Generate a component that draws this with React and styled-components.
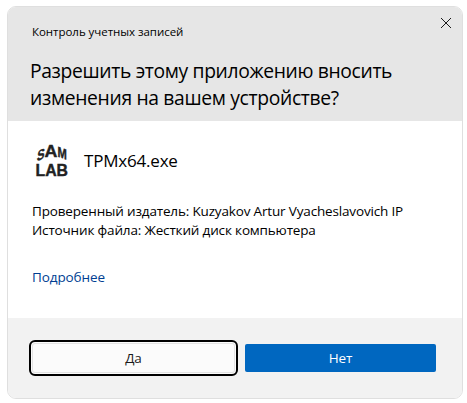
import React from 'react';
import styled, { createGlobalStyle } from 'styled-components';

const GlobalStyle = createGlobalStyle`
  * { box-sizing: border-box; }
  body { margin: 0; background: #fff; font-family: "Open Sans", "Noto Sans", sans-serif; color: #000; }
`;

const Screen = styled.main`
  width: 467px;
  height: 403px;
  padding: 6px 4px 4px 7px;
  overflow: hidden;
`;

const Dialog = styled.section`
  display: flex;
  flex-direction: column;
  width: 456px;
  height: 393px;
  border: 1px solid #dfdfdf;
  border-radius: 9px;
  overflow: hidden;
  background: #fff;
`;

const Header = styled.header`
  display: flex;
  justify-content: space-between;
  height: 114px;
  flex: none;
  padding: 0 9px 0 24px;
  background: #e6e6e6;
`;

const Headings = styled.div`
  padding-top: 15px;
`;

const Line = styled.div`
  white-space: nowrap;
  font-size: ${p => p.$size}px;
  line-height: ${p => p.$height}px;
  letter-spacing: ${p => p.$track || 0}px;
`;

const Title = styled.h1`
  margin: 15px 0 0 -2px;
  font-weight: 400;
`;

const CloseButton = styled.button`
  display: block;
  width: 15px;
  height: 15px;
  margin-top: 8px;
  padding: 0;
  border: 0;
  background: none;
  svg { display: block; }
`;

const Body = styled.div`
  height: 197px;
  flex: none;
  padding: 20px 24px 0;
`;

const Program = styled.div`
  display: flex;
  align-items: center;
  gap: 12px;
  height: 40px;
  svg { flex: none; }
`;

const Details = styled.div`
  margin-top: 21px;
`;

const MoreLink = styled.a`
  display: block;
  margin-top: 28px;
  color: #003e92;
`;

const Footer = styled.footer`
  display: flex;
  align-items: flex-start;
  gap: 7px;
  flex: 1;
  padding: 22px 0 0 21px;
  background: #f2f2f2;
`;

const Button = styled.button`
  display: flex;
  align-items: center;
  justify-content: center;
  padding: 0;
  font-family: inherit;
`;

const YesButton = styled(Button)`
  width: 209px;
  height: 36px;
  border: 2px solid #000;
  border-radius: 6px;
  background: #fbfbfb;
  box-shadow: inset 0 0 0 1px #fbfbfb, inset 0 0 0 2px #e3e3e3;
  color: #1b1b1b;
`;

const NoButton = styled(Button)`
  width: 191px;
  height: 28px;
  margin-top: 4px;
  border: 0;
  border-radius: 2px;
  background: #0067c0;
  color: #fff;
`;

const Logo = () => (
  <svg width="40" height="40" viewBox="0 0 40 40" fontFamily="Liberation Sans" fontWeight="700" fill="#222" stroke="#222" strokeWidth=".4">
    <text transform="matrix(.76 -.34 -.12 1 4.6 20.5)" fontSize="15">S</text>
    <text transform="matrix(1.08 0 0 1 12.4 15.7)" fontSize="16.5">A</text>
    <text transform="matrix(.8 .28 0 1.05 25.4 15.6)" fontSize="14">M</text>
    <text x="3.5" y="35" fontSize="16" textLength="32.5" lengthAdjust="spacingAndGlyphs">LAB</text>
  </svg>
);

export default function App() {
  return (
    <>
      <GlobalStyle />
      <Screen>
        <Dialog role="dialog">
          <Header>
            <Headings>
              <Line $size={11.5} $height={20} $track={-0.04}>Контроль учетных записей</Line>
              <Title>
                <Line $size={19.3} $height={27} $track={-0.35}>Разрешить этому приложению вносить</Line>
                <Line $size={19.3} $height={27} $track={-0.33}>изменения на вашем устройстве?</Line>
              </Title>
            </Headings>
            <CloseButton aria-label="Закрыть">
              <svg width="15" height="15" viewBox="0 0 15 15" fill="none" stroke="#1a1a1a" strokeWidth="1">
                <path d="M3 3l10 10M13 3l-10 10" />
              </svg>
            </CloseButton>
          </Header>
          <Body>
            <Program>
              <Logo />
              <Line $size={17} $height={26} $track={-0.2}>TPMx64.exe</Line>
            </Program>
            <Details>
              <Line $size={13.5} $height={19} $track={-0.16}>Проверенный издатель: Kuzyakov Artur Vyacheslavovich IP</Line>
              <Line $size={13.5} $height={19} $track={-0.16}>Источник файла: Жесткий диск компьютера</Line>
            </Details>
            <MoreLink><Line $size={13.5} $height={19} $track={-0.1}>Подробнее</Line></MoreLink>
          </Body>
          <Footer>
            <YesButton><Line $size={13.5} $height={19}>Да</Line></YesButton>
            <NoButton><Line $size={13.5} $height={19} $track={-0.2}>Нет</Line></NoButton>
          </Footer>
        </Dialog>
      </Screen>
    </>
  );
}
